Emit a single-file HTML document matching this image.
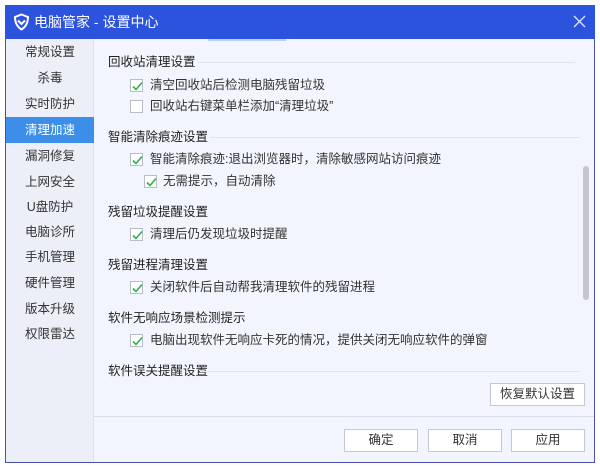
<!DOCTYPE html>
<html><head><meta charset="utf-8"><style>
*{margin:0;padding:0;box-sizing:border-box}
body{width:600px;height:467px;background:#fff;font-family:"Liberation Sans","Noto Sans CJK SC",sans-serif;font-size:12.5px;color:#333;position:relative;overflow:hidden}
.win{position:absolute;left:5px;top:5px;width:590px;height:458px;border:1px solid #4a4fae;border-top:none;background:#f2f5fd}
.title{position:absolute;left:0;top:0;width:589px;height:34px;background:#2c53dd;color:#fff;font-size:14px}
.title span{position:absolute;left:28px;top:8px;line-height:18px}
.side{position:absolute;left:0;top:34px;width:88px;height:423px;background:#eceff8;border-right:1px solid #dfe2ec}
.side div{position:absolute;left:0;width:88px;height:26px;line-height:26px;text-align:center;font-size:12.5px;color:#333}
.side .sel{background:#3d8ee9;color:#fff}
.c{position:absolute;font-size:12.5px;white-space:nowrap;line-height:16px}
.h{color:#222}
.ln{position:absolute;height:1px;background:#dfe4ef}
.cb{position:absolute;width:13px;height:13px;border:1px solid #b8bcc6;background:#fff}
.cb svg{position:absolute;left:0;top:0}
.btn{position:absolute;height:23px;border:1px solid #c4c8d0;background:#fff;text-align:center;line-height:21px;font-size:12.5px;color:#333}
</style></head><body>
<div class="win">
<div class="title">
<svg style="position:absolute;left:7px;top:8px" width="17" height="18" viewBox="0 0 17 18"><path d="M8.5 1.5 L15 4 C15 10 12.5 14 8.5 16.5 C4.5 14 2 10 2 4 Z" fill="none" stroke="#fff" stroke-width="2"/><path d="M5 7.5 L8.5 11 L12 7.5" fill="none" stroke="#fff" stroke-width="2"/></svg>
<span>电脑管家 - 设置中心</span>
<svg style="position:absolute;left:567px;top:10px" width="13" height="13"><path d="M1 1L12 12M12 1L1 12" stroke="#dfe6ff" stroke-width="1.3"/></svg>
</div>
<div class="side">
<div style="top:0px">常规设置</div>
<div style="top:26px">杀毒</div>
<div style="top:52px">实时防护</div>
<div class="sel" style="top:78px">清理加速</div>
<div style="top:104px">漏洞修复</div>
<div style="top:130px">上网安全</div>
<div style="top:155px">U盘防护</div>
<div style="top:180px">电脑诊所</div>
<div style="top:205px">手机管理</div>
<div style="top:231px">硬件管理</div>
<div style="top:257px">版本升级</div>
<div style="top:282px">权限雷达</div>
</div>
</div>
<div style="position:absolute;left:208px;top:39px;width:78px;height:2px;background:#b9d3f3"></div>
<div style="position:absolute;left:94px;top:416px;width:500px;height:1px;background:#d9dde6"></div>

<div class="c h" style="left:108px;top:54px">回收站清理设置</div><div class="ln" style="left:198px;top:62px;width:377px"></div>
<div class="cb" style="left:130px;top:79px"><svg width="13" height="13"><path d="M2 6.5L5 9.5L11 2.5" fill="none" stroke="#2bb34a" stroke-width="1.6"/></svg></div>
<div class="c" style="left:150px;top:77px">清空回收站后检测电脑残留垃圾</div>
<div class="cb" style="left:130px;top:100px"></div>
<div class="c" style="left:150px;top:98px">回收站右键菜单栏添加“清理垃圾”</div>

<div class="c h" style="left:108px;top:129px">智能清除痕迹设置</div><div class="ln" style="left:210px;top:137px;width:370px"></div>
<div class="cb" style="left:130px;top:153px"><svg width="13" height="13"><path d="M2 6.5L5 9.5L11 2.5" fill="none" stroke="#2bb34a" stroke-width="1.6"/></svg></div>
<div class="c" style="left:150px;top:151px">智能清除痕迹:退出浏览器时，清除敏感网站访问痕迹</div>
<div class="cb" style="left:144px;top:175px"><svg width="13" height="13"><path d="M2 6.5L5 9.5L11 2.5" fill="none" stroke="#2bb34a" stroke-width="1.6"/></svg></div>
<div class="c" style="left:163px;top:173px">无需提示，自动清除</div>

<div class="c h" style="left:108px;top:204px">残留垃圾提醒设置</div>
<div class="cb" style="left:130px;top:228px"><svg width="13" height="13"><path d="M2 6.5L5 9.5L11 2.5" fill="none" stroke="#2bb34a" stroke-width="1.6"/></svg></div>
<div class="c" style="left:150px;top:226px">清理后仍发现垃圾时提醒</div>

<div class="c h" style="left:108px;top:257px">残留进程清理设置</div>
<div class="cb" style="left:130px;top:281px"><svg width="13" height="13"><path d="M2 6.5L5 9.5L11 2.5" fill="none" stroke="#2bb34a" stroke-width="1.6"/></svg></div>
<div class="c" style="left:150px;top:279px">关闭软件后自动帮我清理软件的残留进程</div>

<div class="c h" style="left:108px;top:310px">软件无响应场景检测提示</div>
<div class="cb" style="left:130px;top:334px"><svg width="13" height="13"><path d="M2 6.5L5 9.5L11 2.5" fill="none" stroke="#2bb34a" stroke-width="1.6"/></svg></div>
<div class="c" style="left:150px;top:332px">电脑出现软件无响应卡死的情况，提供关闭无响应软件的弹窗</div>

<div class="c h" style="left:108px;top:363px">软件误关提醒设置</div>
<div class="ln" style="left:200px;top:371px;width:380px"></div>

<div style="position:absolute;left:583px;top:166px;width:6px;height:134px;border-radius:3px;background:#c4c6cc"></div>

<div class="btn" style="left:490px;top:383px;width:95px">恢复默认设置</div>
<div class="btn" style="left:344px;top:429px;width:74px">确定</div>
<div class="btn" style="left:428px;top:429px;width:74px">取消</div>
<div class="btn" style="left:511px;top:429px;width:74px">应用</div>
</body></html>
